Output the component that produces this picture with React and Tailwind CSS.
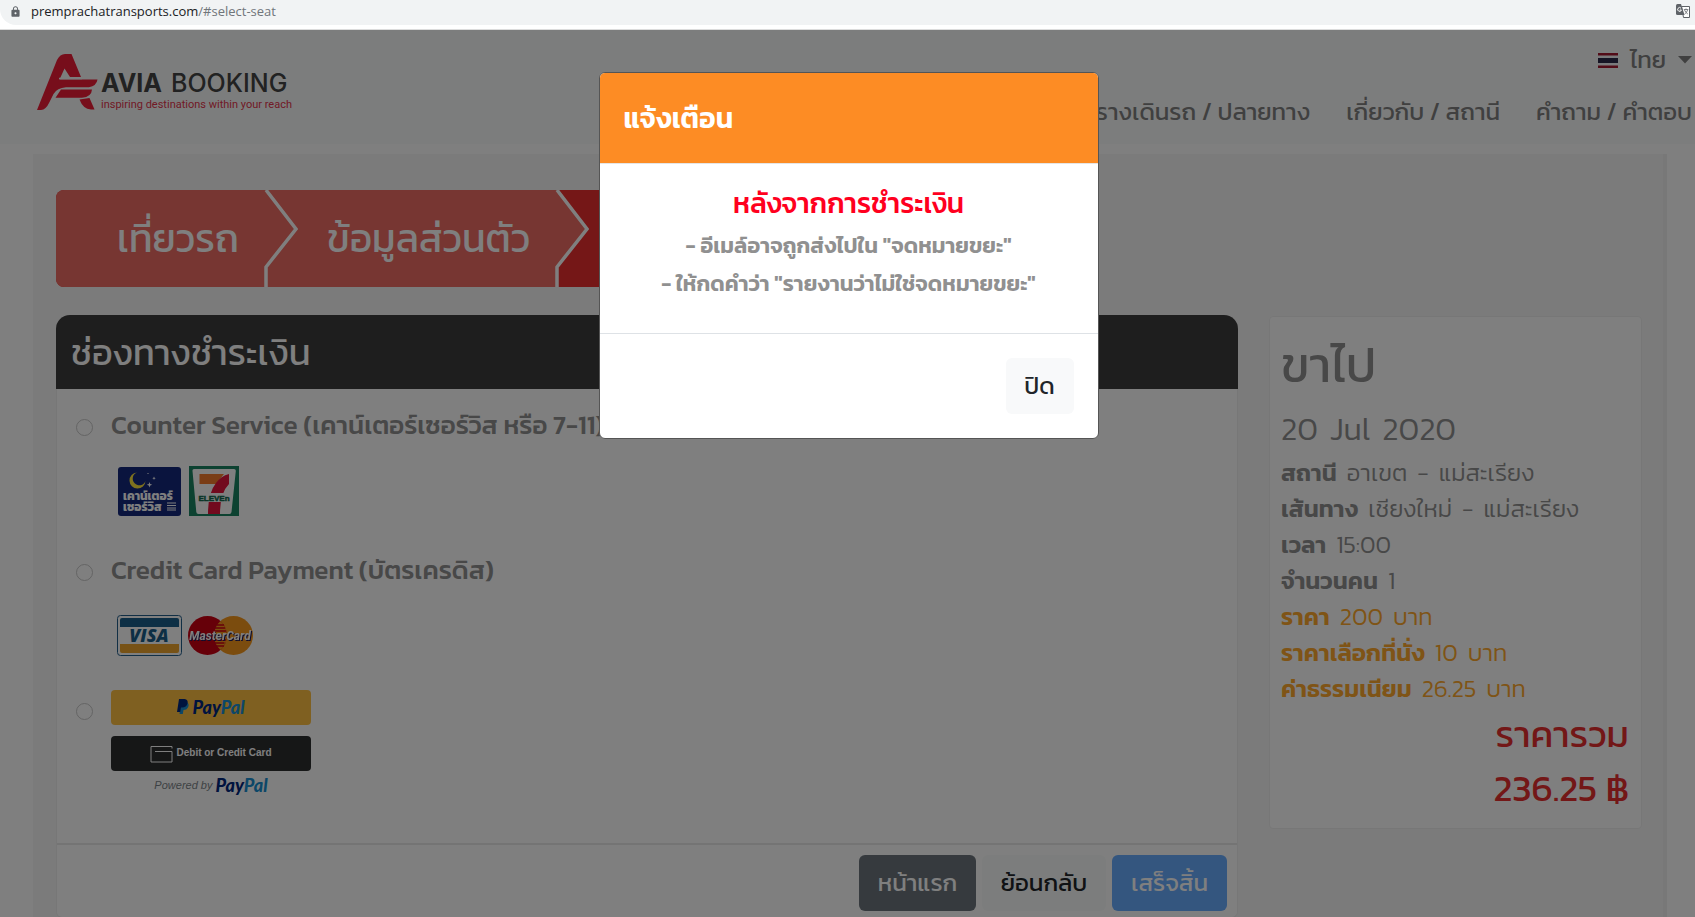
import React, { useState } from 'react';
import { IoMdLock } from 'react-icons/io';

const navLinks = [
  { label: 'ตารางเดินรถ / ปลายทาง', href: '#timetable' },
  { label: 'เกี่ยวกับ / สถานี', href: '#about' },
  { label: 'คำถาม / คำตอบ', href: '#faq' },
];

const tripDetails = [
  { label: 'สถานี', value: 'อาเขต - แม่สะเรียง' },
  { label: 'เส้นทาง', value: 'เชียงใหม่ - แม่สะเรียง' },
  { label: 'เวลา', value: '15:00' },
  { label: 'จำนวนคน', value: '1' },
  { label: 'ราคา', value: '200 บาท', price: true },
  { label: 'ราคาเลือกที่นั่ง', value: '10 บาท', price: true },
  { label: 'ค่าธรรมเนียม', value: '26.25 บาท', price: true },
];

function TranslateIcon() {
  return (
    <svg width="14" height="14" viewBox="0 0 14 14" aria-hidden="true">
      <path d="M5.500 2.500h8v11h-6z" fill="#fff" stroke="#5f6368" />
      <path d="M0 1.500Q0 0 1.500 0H5l3.500 11H1.500Q0 11 0 9.500z" fill="#5f6368" />
      <path d="M5 4.200A1.900 1.900 0 1 0 5.400 6H3.700" fill="none" stroke="#fff" />
      <path d="M7.800 5.500h4.500M10 4.500v1M8.500 6q1 2.500 3.300 4M11.600 6q-.8 2.700-3 4" fill="none" stroke="#5f6368" strokeWidth=".8" />
    </svg>
  );
}

function AddressBar() {
  return (
    <div className="flex h-[30px] shrink-0 flex-col border-b border-[#dcdcdc] bg-white">
      <div className="flex h-[25px] items-center rounded-bl-2xl bg-[#f1f3f4] pr-[5px] pb-[3px] pl-[9px]">
        <IoMdLock size={13} className="text-[#5f6368]" />
        <span className="ml-[9px] flex-1 font-['Open_Sans',sans-serif] text-[13px] leading-5 text-[#202124]">
          premprachatransports.com<span className="text-[#70757a]">/#select-seat</span>
        </span>
        <TranslateIcon />
      </div>
    </div>
  );
}

function Logo() {
  return (
    <a href="#home" aria-label="Avia Booking">
      <svg width="260" height="64" viewBox="0 0 260 64">
        <g fill="#ee1c37">
          <path d="M0 58L20 8Q23 2 28 2H34.500L44 25H33L27.500 16.500L22.500 27.500H60.500Q59.500 34 52 35.300H29Q20 36 16.500 42L12 51Q9 57.500 4 58z" />
          <path d="M22 37.500H55Q54.500 45 45 45.700H18.500L24 37.500z" />
          <path d="M42.500 47.500L52.500 46L57.500 57.500H54Q46 57 42.500 47.500z" />
        </g>
        <path d="M22 26.500H45" stroke="#f8f9fa" strokeWidth="1.500" />
        <text x="64" y="40" fontFamily="Inter, sans-serif" fontSize="25" fontWeight="700" fill="#444">AVIA</text>
        <text x="134" y="40" fontFamily="Inter, sans-serif" fontSize="25" fontWeight="500" fill="#444">BOOKING</text>
        <text x="64" y="56" fontFamily="Roboto, sans-serif" fontSize="11" fill="#e4344c">inspiring destinations within your reach</text>
      </svg>
    </a>
  );
}

function ThaiFlag() {
  return (
    <svg width="20" height="15" viewBox="0 0 20 15" aria-hidden="true">
      <path d="M0 0h20v15H0z" fill="#f4f5f8" />
      <path d="M0 0h20v2.500H0zM0 12.500h20V15H0z" fill="#a51931" />
      <path d="M0 5h20v5H0z" fill="#2d2a4a" />
    </svg>
  );
}

function SiteHeader() {
  return (
    <header className="flex h-[114px] shrink-0 justify-between bg-[#f8fbfa] pr-[3px] pl-[37px] text-[#808080]">
      <div className="pt-[22px]"><Logo /></div>
      <div className="flex flex-col items-end pt-3">
        <button type="button" className="flex items-center gap-3 text-2xl leading-9">
          <ThaiFlag />
          <span>ไทย</span>
          <svg width="14" height="8" viewBox="0 0 14 8" aria-hidden="true"><path d="M0 0h14L7 7.500z" fill="currentColor" /></svg>
        </button>
        <nav className="mt-4 flex gap-9 text-2xl leading-9">
          {navLinks.map((link) => (
            <a key={link.href} href={link.href} className="whitespace-nowrap">{link.label}</a>
          ))}
        </nav>
      </div>
    </header>
  );
}

function Steps() {
  return (
    <div className="relative flex h-[97px] w-[842px] overflow-hidden rounded-lg text-white">
      <svg className="absolute inset-0" width="842" height="97" viewBox="0 0 842 97" aria-hidden="true">
        <path d="M0 0h842v97H0z" fill="#ea2e2e" />
        <path d="M0 0H501L532 39L501 77V97H0z" fill="#ee6c64" />
        <path d="M210 0L240 39L210 77V97M501 0L531 39L501 77V97" fill="none" stroke="#fff" strokeWidth="3.500" />
      </svg>
      <ol className="relative flex text-[39px] leading-[97px]">
        <li className="w-[210px] pl-[61px] whitespace-nowrap">เที่ยวรถ</li>
        <li className="w-[291px] pl-[61px] whitespace-nowrap">ข้อมูลส่วนตัว</li>
        <li className="w-[341px]" aria-label="ชำระเงิน" aria-current="step" />
      </ol>
    </div>
  );
}

function CounterServiceLogo() {
  return (
    <svg width="63" height="49" viewBox="0 0 63 49" role="img" aria-label="Counter Service">
      <rect width="63" height="49" rx="3" fill="#15297d" />
      <path d="M19 5.500A8 8 0 1 0 27.500 14A6.600 6.600 0 1 1 19 5.500z" fill="#ffe43c" />
      <path d="M31.500 15l.7 2 2 .7-2 .7-.7 2-.7-2-2-.7 2-.7zM36 9.500l.5 1.200 1.200.5-1.200.5-.5 1.200-.5-1.200-1.200-.5 1.200-.5zM29.500 6h1v1h-1z" fill="#fff" />
      <path d="M49 36h9M49 38.500h9M49 41h9M49 43h9" stroke="#fff" strokeWidth="1" />
      <g fontFamily="Kanit, 'Noto Sans', sans-serif" fontSize="12" fontWeight="700" fill="#fff">
        <text x="5" y="33">เคาน์เตอร์</text>
        <text x="5" y="44">เซอร์วิส</text>
      </g>
    </svg>
  );
}

function SevenElevenLogo() {
  return (
    <svg width="50" height="50" viewBox="0 0 50 50" role="img" aria-label="7-Eleven">
      <path d="M0 0h50v50H0z" fill="#1a8562" />
      <path d="M5 3h40q2 0 1.800 2L42.500 46q-.3 2-2 2H9.500q-2 0-2.200-2L3.500 5Q3.300 3 5 3z" fill="#fff" />
      <path d="M10.500 8H35L27 18H10.500z" fill="#f47a2c" />
      <path d="M40 8V18Q31 27 31 48H19Q19 27 27 17Q32 10 40 8z" fill="#e4153c" />
      <path d="M9 27h32v9H9z" fill="#fff" />
      <text x="25" y="35" textAnchor="middle" fontFamily="'Liberation Sans', sans-serif" fontSize="8" fontWeight="700" fill="#116b4e" stroke="#116b4e" strokeWidth=".5">ELEVEn</text>
    </svg>
  );
}

function VisaLogo() {
  return (
    <svg width="65" height="41" viewBox="0 0 65 41" role="img" aria-label="Visa">
      <rect x=".5" y=".5" width="64" height="40" rx="3" fill="#fff" stroke="#235f8a" />
      <path d="M3 5q0-2 2-2h55q2 0 2 2v7H3z" fill="#1a5f8a" />
      <path d="M3 29h59v7q0 2-2 2H5q-2 0-2-2z" fill="#eea52c" />
      <text x="32" y="27" textAnchor="middle" fontFamily="'Open Sans', sans-serif" fontSize="18" fontWeight="800" fontStyle="italic" fill="#1a5f8a">VISA</text>
    </svg>
  );
}

function MasterCardLogo() {
  return (
    <svg width="65" height="39" viewBox="0 0 65 39" role="img" aria-label="MasterCard">
      <circle cx="45.500" cy="19.500" r="19.500" fill="#f7981d" />
      <circle cx="19.500" cy="19.500" r="19.500" fill="#cc0013" />
      <path d="M32.500 5A19.500 19.500 0 0 1 32.500 34A19.500 19.500 0 0 1 32.500 5z" fill="#f7981d" />
      <path d="M29 9h7M27 12h10M26 15h12M26 24h12M26.500 27h10M28 30h8" stroke="#cc0013" strokeWidth="1.500" />
      <text
        x="32" y="24" textAnchor="middle" fontFamily="Roboto, sans-serif" fontSize="12" fontWeight="700" fontStyle="italic"
        fill="#fff" className="[filter:drop-shadow(1px_1px_0_#1b1b5c)]"
      >
        MasterCard
      </text>
    </svg>
  );
}

function PayPalMark() {
  return (
    <svg width="12" height="15" viewBox="0 0 12 15" aria-hidden="true">
      <path d="M4 3.500H10.500Q12.500 5.500 11 8.500Q9.800 11 6.500 11L5.800 15H2.500z" fill="#1a8fd0" />
      <path d="M2 0H7.500Q11.500 .5 10.500 4.500Q9.500 8.500 5 8.500H4L3.200 13H0z" fill="#00267d" />
    </svg>
  );
}

function PayPalWord() {
  return (
    <span className="font-['Lato',sans-serif] text-[18px] leading-5 font-black text-[#00267d] italic">
      Pay<span className="text-[#1a8fd0]">Pal</span>
    </span>
  );
}

function PaymentOption({ id, label, children }) {
  return (
    <div>
      <div className="flex h-9 items-center">
        <input id={id} type="radio" name="payment" className="size-[17px] shrink-0 appearance-none rounded-full border border-[#c8c8c8]" />
        <label htmlFor={id} className="mb-1 ml-[18px] text-[26px] leading-8 font-medium whitespace-nowrap">{label}</label>
      </div>
      <div className="flex items-center pl-[41px]">{children}</div>
    </div>
  );
}

function PaymentCard() {
  return (
    <section className="min-w-0 flex-1 self-start">
      <h2 className="h-[74px] rounded-t-[14px] bg-[#3c3c3c] pl-[15px] text-4xl leading-[74px] text-white">ช่องทางชำระเงิน</h2>
      <div className="rounded-b-md border border-t-0 border-[#efefef] bg-white text-[#909090]">
        <div className="flex h-[454px] flex-col px-[19px] pt-5">
          <PaymentOption id="counter" label="Counter Service (เคาน์เตอร์เซอร์วิส หรือ 7-11)">
            <div className="flex items-center gap-2 pt-[21px] pl-px">
              <CounterServiceLogo />
              <SevenElevenLogo />
            </div>
          </PaymentOption>
          <div className="mt-[38px]">
            <PaymentOption id="credit" label="Credit Card Payment (บัตรเครดิส)">
              <div className="flex items-center gap-[6px] pt-[25px]">
                <VisaLogo />
                <MasterCardLogo />
              </div>
            </PaymentOption>
          </div>
          <div className="mt-[34px] flex items-start">
            <input type="radio" name="payment" aria-label="PayPal" className="mt-[13px] size-[17px] shrink-0 appearance-none rounded-full border border-[#c8c8c8]" />
            <div className="ml-[18px] flex w-[200px] flex-col">
              <button type="button" aria-label="PayPal" className="flex h-[35px] items-center justify-center gap-[3px] rounded bg-[#ffc043] pb-0.5">
                <PayPalMark />
                <PayPalWord />
              </button>
              <button type="button" className="mt-[11px] flex h-[35px] items-center justify-center gap-[3px] rounded bg-[#2c2e2f] font-['Liberation_Sans',Arial,sans-serif] text-[10px] font-bold text-white">
                <svg width="23" height="18" viewBox="0 0 23 18" fill="none" stroke="currentColor" aria-hidden="true">
                  <path d="M22 3.500V1.500H1V17H22V6.500H5" />
                </svg>
                <span className="pb-0.5">Debit or Credit Card</span>
              </button>
              <div className="mt-1 flex h-5 items-center justify-center gap-[3px] font-['Liberation_Sans',Arial,sans-serif] text-[11px] text-[#7b8388] italic">
                Powered by <PayPalWord />
              </div>
            </div>
          </div>
        </div>
        <div className="flex justify-end gap-1.5 border-t-2 border-[#e8e8e8] px-[10px] pt-[10px] pb-[6px] text-2xl leading-9">
          <button type="button" className="h-14 w-[117px] rounded-md bg-[#6c757d] text-white">หน้าแรก</button>
          <button type="button" className="h-14 w-[124px] rounded-md bg-[#f8fbfa] text-[#212529]">ย้อนกลับ</button>
          <button type="button" className="h-14 w-[115px] rounded-md bg-[#68acff] text-white">เสร็จสิ้น</button>
        </div>
      </div>
    </section>
  );
}

function TripSummary() {
  return (
    <aside className="mt-px h-[513px] w-[373px] shrink-0 rounded border border-[#efefef] bg-white pr-3 pl-[11px] text-[#909090]">
      <h2 className="mt-4 h-16 text-[49px] leading-[64px]">ขาไป</h2>
      <p className="mt-2.5 mb-1 flex h-11 gap-3 text-[32px] leading-[44px] font-light">
        <span>20</span> <span>Jul</span> <span>2020</span>
      </p>
      {tripDetails.map((row) => (
        <p key={row.label} className={`flex h-9 items-baseline gap-[10px] text-2xl leading-9 ${row.price ? 'text-[#ffa82c]' : ''}`}>
          <span className="font-semibold">{row.label}</span>
          {row.value.split(' ').map((word, i) => (
            <span key={i} className="font-light">{word}</span>
          ))}
        </p>
      ))}
      <div className="text-right text-[37px] leading-[54px] text-[#e62e2e]">
        <p>ราคารวม</p>
        <p>236.25 ฿</p>
      </div>
    </aside>
  );
}

function NoticeModal({ onClose }) {
  return (
    <div className="absolute inset-0 flex items-start justify-center bg-black/50 pt-[42px]">
      <div role="dialog" aria-labelledby="notice-title" className="ml-[2px] w-[500px] overflow-hidden rounded-md border border-[#555] bg-white">
        <h2 id="notice-title" className="h-[91px] border-b border-[#e5e5e5] bg-[#fd8c24] px-6 text-[28px] leading-[90px] font-semibold text-white">แจ้งเตือน</h2>
        <div className="h-[169px] pt-[18px] text-center">
          <p className="mb-[3px] text-[28px] leading-[42px] font-medium text-[#ff001e]">หลังจากการชำระเงิน</p>
          <p className="text-[22px] leading-[38px] font-semibold text-[#909090]">- อีเมล์อาจถูกส่งไปใน "จดหมายขยะ"</p>
          <p className="text-[22px] leading-[38px] font-semibold text-[#909090]">- ให้กดคำว่า "รายงานว่าไม่ใช่จดหมายขยะ"</p>
        </div>
        <div className="flex justify-end border-t border-[#dee2e6] p-6">
          <button type="button" onClick={onClose} className="h-14 w-[68px] rounded-md bg-[#f8f9fa] text-2xl text-[#212529]">ปิด</button>
        </div>
      </div>
    </div>
  );
}

export default function App() {
  const [noticeOpen, setNoticeOpen] = useState(true);

  return (
    <div className="flex h-screen flex-col overflow-hidden font-['Kanit','Noto_Sans_Thai','Noto_Sans',sans-serif]">
      <AddressBar />
      <div className="relative flex min-h-0 flex-1 flex-col bg-white">
        <SiteHeader />
        <main className="mt-[10px] mr-[28px] ml-[33px] min-h-0 flex-1 overflow-hidden border-r-4 border-[#f0f0f0] bg-[#f7f7f7] pt-9 pr-[21px] pl-[23px]">
          <Steps />
          <div className="mt-7 flex gap-[31px]">
            <PaymentCard />
            <TripSummary />
          </div>
        </main>
        {noticeOpen && <NoticeModal onClose={() => setNoticeOpen(false)} />}
      </div>
    </div>
  );
}
